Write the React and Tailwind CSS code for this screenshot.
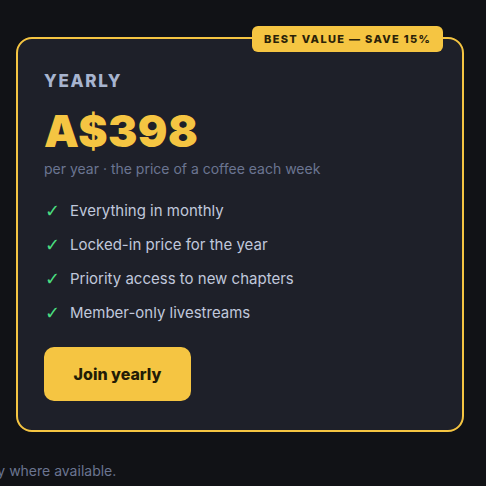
import React from "react";

const features = [
  "Everything in monthly",
  "Locked-in price for the year",
  "Priority access to new chapters",
  "Member-only livestreams",
];

export default function App() {
  return (
    <div className="w-[486px] h-[486px] overflow-hidden bg-[#111216] font-['Inter',sans-serif]">
      <div className="pt-[37px] px-4">
        <div className="relative w-[448px] h-[395px] rounded-[16px] border-2 border-[#f5c542] bg-[#1e2029] pl-[26px] pt-[32px]">
          <div className="absolute left-[234px] top-[-13px] h-[26px] px-3 rounded-[6px] bg-[#f5c542] flex items-center text-[11px] font-extrabold tracking-[0.12em] text-[#2a2208] whitespace-nowrap">
            BEST VALUE — SAVE 15%
          </div>
          <div className="text-[17px] leading-[20px] font-extrabold tracking-[0.1em] text-[#a7b4cf]">YEARLY</div>
          <div className="mt-[16px] text-[44px] leading-[48px] font-black text-[#f5c542] tracking-[0.01em]">A$398</div>
          <div className="mt-[4px] text-[14px] leading-[20px] text-[#6b7591]">per year · the price of a coffee each week</div>
          <ul className="mt-[21px] flex flex-col gap-[12px]">
            {features.map((f) => (
              <li key={f} className="flex items-center h-[22px] text-[15px] text-[#c0c8dc]">
                <span className="w-[26px] pl-[1px] font-['DejaVu_Sans',sans-serif] font-bold text-[#4ade80] text-[18px] leading-none">✓</span>
                <span>{f}</span>
              </li>
            ))}
          </ul>
          <button className="mt-[23px] w-[147px] h-[54px] rounded-[10px] bg-[#f5c542] text-[16px] font-extrabold text-[#231c06]">
            Join yearly
          </button>
        </div>
      </div>
      <div className="mt-[28px] ml-[-172px] whitespace-nowrap text-[14px] text-[#6b7591]">
        Prices in AUD. Taxes apply where available.
      </div>
    </div>
  );
}
